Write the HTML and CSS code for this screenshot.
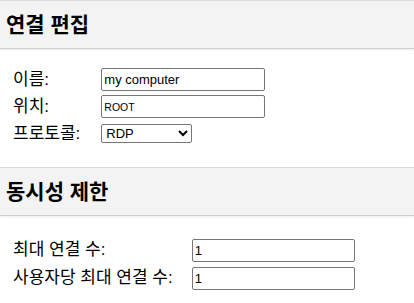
FILE: index.html
```html
<!DOCTYPE html>
<html lang="ko">
<head>
  <meta charset="UTF-8">
  <title>연결 편집</title>
  <link rel="stylesheet" href="styles.css">
</head>
<body>

  <div class="header">
    <h2>연결 편집</h2>
  </div>

  <div class="section connection">
    <table class="fields">
      <tr>
        <th>이름:</th>
        <td><input type="text" class="name" value="my computer"></td>
      </tr>
      <tr>
        <th>위치:</th>
        <td><input type="text" class="location" value="ROOT"></td>
      </tr>
      <tr>
        <th>프로토콜:</th>
        <td>
          <select class="protocol">
            <option>RDP</option>
            <option>SSH</option>
            <option>VNC</option>
            <option>Telnet</option>
          </select>
        </td>
      </tr>
    </table>
  </div>

  <div class="header">
    <h2>동시성 제한</h2>
  </div>

  <div class="section limits">
    <table class="fields">
      <tr>
        <th>최대 연결 수:</th>
        <td><input type="number" value="1"></td>
      </tr>
      <tr>
        <th>사용자당 최대 연결 수:</th>
        <td><input type="number" value="1"></td>
      </tr>
    </table>
  </div>

</body>
</html>
```

FILE: styles.css
```css
* {
  margin: 0; padding: 0; box-sizing: border-box;
}

body {
  font-family: 'Liberation Sans', 'Noto Sans CJK KR', sans-serif;
  font-size: 16px;
  color: #000;
  background: #fff;
}

.header {
  background: #f3f3f3;
  border-top: 1px solid #dcdcdc;
  border-bottom: 1px solid #cfcfcf;
  box-shadow: 0 1px 2px rgba(0, 0, 0, 0.08);
  height: 49px;
  display: flex;
  align-items: center;
  padding: 0 6px;
}

.header h2 {
  font-size: 21px;
  font-weight: bold;
  line-height: 26px;
}

.section {
  padding: 17px 11px 20px;
}

.section.limits {
  padding-top: 20px;
}

.fields {
  border-collapse: separate;
  border-spacing: 0;
}

.fields tr {
  height: 27px;
}

.limits .fields tr {
  height: 28px;
}

.fields th {
  font-size: 17px;
  font-weight: normal;
  text-align: left;
  white-space: nowrap;
  padding: 0 17px 0 2px;
  line-height: 20px;
  vertical-align: middle;
}

.connection .fields th {
  padding-right: 19px;
}

.fields td {
  padding: 0 2px;
  vertical-align: middle;
}

.fields input {
  display: block;
  width: 164px;
  height: 23px;
  padding: 1px 2px;
  border: 1px solid #767676;
  border-radius: 2px;
  font-family: 'Liberation Sans', sans-serif;
  font-size: 13px;
  color: #000;
}

.fields input.location {
  font-size: 10.5px;
}

.fields input[type="number"] {
  width: 163px;
}

.fields select {
  display: block;
  width: 91px;
  height: 19px;
  border: 1px solid #767676;
  border-radius: 2px;
  font-family: 'Liberation Sans', sans-serif;
  font-size: 13px;
  color: #000;
  background: #fff;
}
```
